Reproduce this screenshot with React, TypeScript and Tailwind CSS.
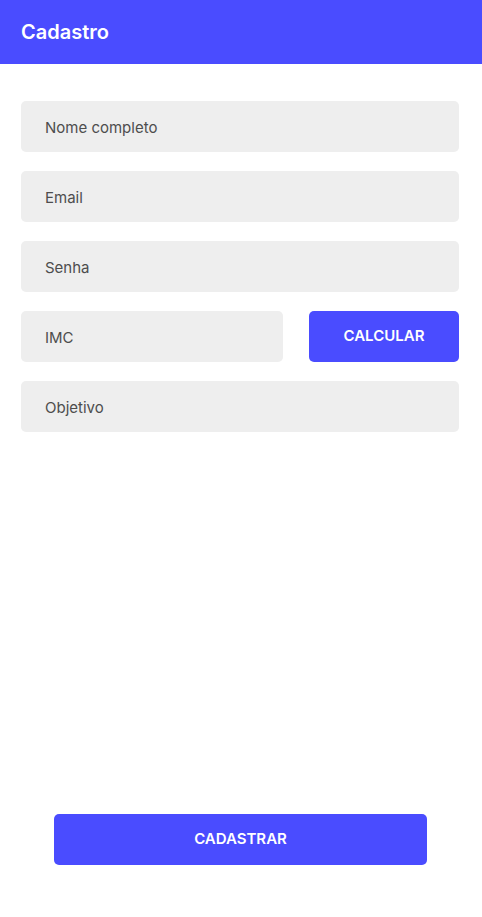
import React from "react";

const font = { fontFamily: "Inter, 'Noto Sans', sans-serif" };

function Field({ placeholder, className = "" }: { placeholder: string; className?: string }) {
  return (
    <input
      placeholder={placeholder}
      className={`h-[51px] rounded-[5px] bg-[#eeeeee] pl-6 pt-px text-[15px] font-normal text-[#4d4d4d] placeholder:text-[#4d4d4d] outline-none ${className}`}
    />
  );
}

export default function App() {
  return (
    <div style={font} className="flex min-h-[917px] w-full flex-col bg-white">
      <header className="flex h-16 items-center bg-[#4a4cff] px-[21px]">
        <h1 className="text-[20px] font-semibold text-white">Cadastro</h1>
      </header>

      <div className="flex flex-col gap-[19px] pl-[21px] pr-[23px] pt-[37px]">
        <Field placeholder="Nome completo" />
        <Field placeholder="Email" />
        <Field placeholder="Senha" />
        <div className="flex items-center justify-between">
          <Field placeholder="IMC" className="w-[262px]" />
          <button className="h-[51px] w-[150px] rounded-[5px] bg-[#4a4cff] text-[15px] font-semibold text-white">
            CALCULAR
          </button>
        </div>
        <Field placeholder="Objetivo" />
      </div>

      <div className="mt-auto flex justify-start pb-[52px] pl-[54px]">
        <button className="h-[51px] w-[373px] rounded-[5px] bg-[#4a4cff] text-[15px] font-semibold text-white">
          CADASTRAR
        </button>
      </div>
    </div>
  );
}
